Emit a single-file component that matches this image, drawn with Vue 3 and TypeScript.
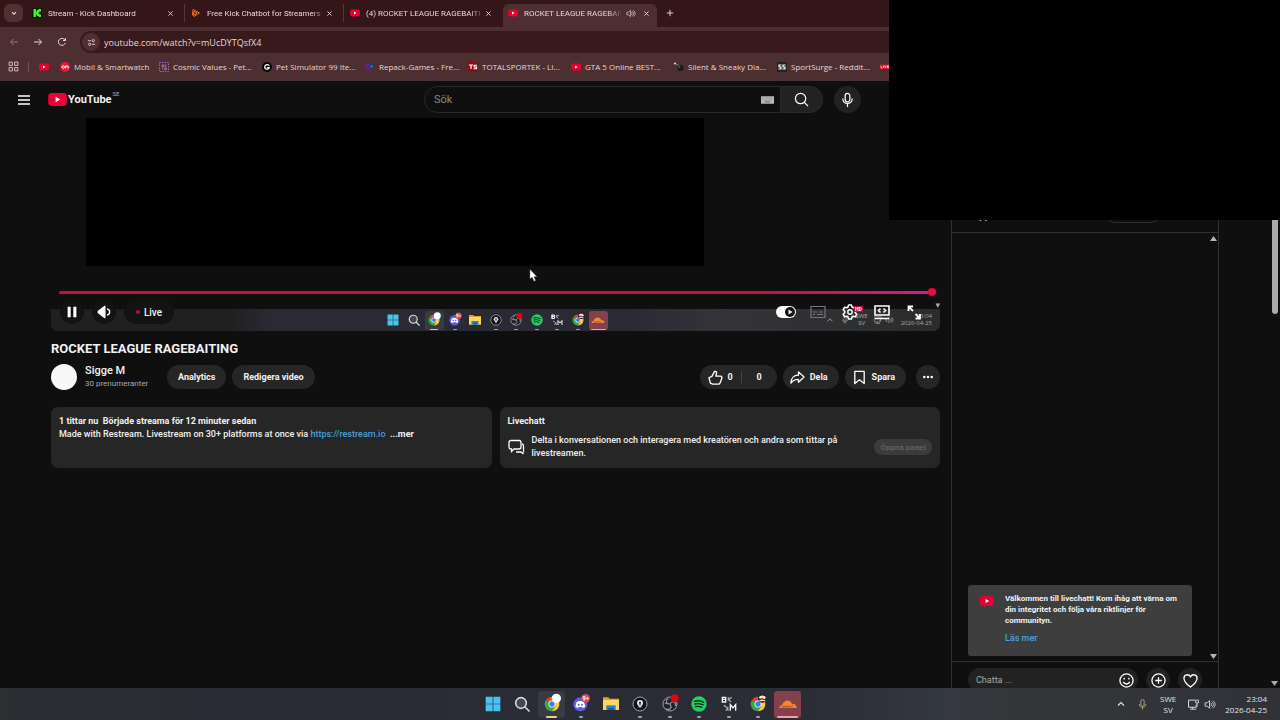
<script setup lang="ts">
import { ref } from 'vue'

interface Tab { icon: string; title: string; active?: boolean; audio?: boolean }
interface Bookmark { icon: string; label: string }
interface App { icon: string; name: string; state: string }

const tabs: Tab[] = [
  { icon: 'kick', title: 'Stream - Kick Dashboard' },
  { icon: 'botrix', title: 'Free Kick Chatbot for Streamers' },
  { icon: 'yt', title: '(4) ROCKET LEAGUE RAGEBAITI' },
  { icon: 'yt', title: 'ROCKET LEAGUE RAGEBAIT', active: true, audio: true },
]

const bookmarks: Bookmark[] = [
  { icon: 'on', label: 'Mobil & Smartwatch' },
  { icon: 'cosmic', label: 'Cosmic Values - Pet...' },
  { icon: 'g', label: 'Pet Simulator 99 Ite...' },
  { icon: 'repack', label: 'Repack-Games - Fre...' },
  { icon: 'ts', label: 'TOTALSPORTEK - LI...' },
  { icon: 'yt', label: 'GTA 5 Online BEST...' },
  { icon: 'bomb', label: 'Silent & Sneaky Dia...' },
  { icon: 'ss', label: 'SportSurge - Reddit...' },
  { icon: 'live', label: '' },
]

const apps: App[] = [
  { icon: 'windows', name: 'Start', state: '' },
  { icon: 'search', name: 'Sök', state: '' },
  { icon: 'chrome-w', name: 'Chrome', state: 'focused' },
  { icon: 'discord', name: 'Discord', state: 'open' },
  { icon: 'folder', name: 'Utforskaren', state: '' },
  { icon: 'lock', name: 'Wallet', state: 'open' },
  { icon: 'obs', name: 'OBS', state: 'open' },
  { icon: 'spotify', name: 'Spotify', state: 'open' },
  { icon: 'bm', name: 'BakkesMod', state: 'open' },
  { icon: 'chrome-p', name: 'Chrome 2', state: 'open' },
  { icon: 'cloud', name: 'Cloudflare', state: 'alert' },
]

const address = ref('youtube.com/watch?v=mUcDYTQsfX4')
const query = ref('')
const message = ref('')
const position = ref(100)
const autoplay = ref(true)
</script>

<template>
  <div class="screen">
    <svg class="sprite" aria-hidden="true">
      <symbol id="yt" viewBox="0 0 20 20"><rect x="0" y="3" width="20" height="14" rx="4" fill="#e60033" /><path d="M8 7l5 3-5 3z" fill="#fff" /></symbol>
      <symbol id="kick" viewBox="0 0 20 20"><rect width="20" height="20" fill="#071b05" /><path d="M3 2h5v5h2V4h3V2h5v5h-3v2h-2v2h2v2h3v5h-5v-2h-3v-3H8v5H3z" fill="#45f52c" /></symbol>
      <symbol id="botrix" viewBox="0 0 20 20"><path d="M4 3l13 7-11 7-3-4 3-1 1 2 5-4-6-3-1 7-2-1z" fill="none" stroke="#f4711c" stroke-width="2" stroke-linejoin="round" /></symbol>
      <symbol id="on" viewBox="0 0 20 20"><circle cx="10" cy="10" r="10" fill="#ee1538" /><g fill="none" stroke="#fff" stroke-width="2"><circle cx="6.500" cy="10" r="2.500" /><path d="M11.500 13V7.500M11.500 10c0-3 5-3 5 0v3" /></g></symbol>
      <symbol id="cosmic" viewBox="0 0 20 20"><rect x="1" y="1" width="18" height="18" fill="none" stroke="#9b62b0" stroke-width="2" stroke-dasharray="3 2" /><path d="M6 6h3v3H6zM11 6h4M11 9h3M7 11v4M11 12h4v3h-4z" fill="none" stroke="#b585c6" stroke-width="1.500" /></symbol>
      <symbol id="g" viewBox="0 0 20 20"><circle cx="10" cy="10" r="10" fill="#050505" /><path d="M14.500 7.500C13 4 5.500 4.500 5.500 10S14 16 14.500 11H10" fill="none" stroke="#fff" stroke-width="2.500" /></symbol>
      <symbol id="repack" viewBox="0 0 20 20"><path d="M2 4l10-2v16l-10-3z" fill="#6c1c82" /><circle cx="13" cy="9" r="6" fill="#243b70" /><circle cx="13" cy="9" r="2" fill="#4290a5" /></symbol>
      <symbol id="ts" viewBox="0 0 20 20"><rect width="20" height="20" fill="#8d0b17" /><path d="M2 6h8M6 6v8M18 6.500h-5.500V10H17v3.500h-6" fill="none" stroke="#fff" stroke-width="2.400" /></symbol>
      <symbol id="bomb" viewBox="0 0 20 20"><circle cx="13" cy="12" r="6" fill="#15191f" /><circle cx="11" cy="10" r="2" fill="#536270" /><path d="M9 7C7 3 5 6 3 3" stroke="#b79667" fill="none" stroke-width="1.500" /><circle cx="2" cy="3" r="2" fill="#ffe39a" /></symbol>
      <symbol id="ss" viewBox="0 0 20 20"><rect width="20" height="20" fill="#222325" /><path d="M9 6H4v4h4v4H3M17 6h-5v4h4v4h-5" fill="none" stroke="#fff" stroke-width="2.300" /></symbol>
      <symbol id="live" viewBox="0 0 20 20"><rect y="5" width="20" height="9" fill="#d6102f" /><path d="M2 7v5h3M7 7v5M9 7l2 5 2-5M18 7.500h-3v4h3M15 9.500h3" fill="none" stroke="#fff" stroke-width="1.300" /></symbol>

      <symbol id="windows" viewBox="0 0 24 24"><path d="M1 1h10.500v10.500H1zM12.500 1H23v10.500H12.500zM1 12.500h10.500V23H1zM12.500 12.500H23V23H12.500z" fill="#49c3f2" /></symbol>
      <symbol id="search" viewBox="0 0 24 24"><circle cx="10.500" cy="10.500" r="8" fill="#45464e" stroke="#d8d9de" stroke-width="2.400" /><path d="M16.500 16.500l6 6" stroke="#d8d9de" stroke-width="2.600" stroke-linecap="round" /></symbol>
      <symbol id="chrome" viewBox="0 0 24 24"><path d="M12 12L2.500 6.500A11 11 0 0 1 21.500 6.500H12z" fill="#e24135" /><path d="M12 12L2.500 6.500A11 11 0 0 0 12 23l5-8z" fill="#38a655" /><path d="M12 12V6.500h9.500A11 11 0 0 1 12 23l5-8z" fill="#f7cb3d" /><circle cx="12" cy="12" r="5.200" fill="#fff" /><circle cx="12" cy="12" r="4" fill="#3d7de2" /></symbol>
      <symbol id="chrome-w" viewBox="0 0 24 24"><use href="#chrome" /><circle cx="18.500" cy="3.500" r="7" fill="#fff" /></symbol>
      <symbol id="chrome-p" viewBox="0 0 24 24"><use href="#chrome" /><circle cx="18.500" cy="3.500" r="6.500" fill="#2b1d19" /><path d="M13 3c1-5 10-5 11 0l-3 2-5-1z" fill="#f0e7df" /><circle cx="18" cy="5" r="2.200" fill="#bd4b31" /><path d="M14 7h9" stroke="#fff" stroke-width="1.500" /></symbol>
      <symbol id="discord" viewBox="0 0 24 24"><circle cx="11" cy="12.500" r="10.500" fill="#5661e8" /><path d="M5.500 9c3-2 8-2 11 0l2 7-4 2-1-1.500h-5L7.500 18l-4-2z" fill="#fff" /><circle cx="8.500" cy="13" r="1.500" fill="#5661e8" /><circle cx="13.500" cy="13" r="1.500" fill="#5661e8" /><circle cx="19" cy="3.500" r="6.500" fill="#d54857" /><path d="M18 3.500h-3v-3h3V6h-3M19.500 3.500h4M21.500 1.500v4" stroke="#fff" fill="none" stroke-width="1.200" /></symbol>
      <symbol id="folder" viewBox="0 0 24 24"><path d="M0 2h8l2 2h14v17H0z" fill="#e2a42a" /><path d="M0 6h24v15H0z" fill="#fdd660" /><path d="M5 14h14v7H5z" fill="#2683c6" /><path d="M8 18h8v3H8z" fill="#135c9a" /></symbol>
      <symbol id="lock" viewBox="0 0 24 24"><circle cx="12" cy="12" r="10.500" fill="#111216" stroke="#a1a4a9" stroke-width="1.500" /><circle cx="12" cy="10.500" r="4.500" fill="#e6e6e6" /><path d="M10 13h4v4h-4z" fill="#e6e6e6" /><circle cx="12" cy="10" r="1.500" fill="#111" /><path d="M12 11v3" stroke="#111" stroke-width="1.500" /></symbol>
      <symbol id="obs" viewBox="0 0 24 24"><circle cx="12" cy="12" r="10.500" fill="#202126" stroke="#a0a1a5" stroke-width="1.500" /><path d="M12 12C5 12 5 5 10 4M12 12c3-6 10-3 8 3M12 12c4 5 0 10-6 7M4 11c4-1 6 1 8 1" fill="none" stroke="#9c9da2" stroke-width="1.600" /><circle cx="19" cy="3.500" r="6" fill="#dc0610" /></symbol>
      <symbol id="spotify" viewBox="0 0 24 24"><circle cx="12" cy="12" r="11.500" fill="#20cf5d" /><path d="M5 8c5-1.500 10-1 14 1.500M6 12c4-1.200 8-.8 12 1.400M7 16c3.500-1 6-.6 9 1" stroke="#10231a" stroke-width="2" stroke-linecap="round" fill="none" /></symbol>
      <symbol id="bm" viewBox="0 0 24 24"><path d="M2 2h5v3H2zM2 5h5v4H2zM2 1v9M14 22v-9l4 5 4-5v9" fill="none" stroke="#f5f5f5" stroke-width="2" /><path d="M11 2v5M11 5l5-3M11 5l4 4M4 14l5 3 2 5M7 22l4-5" stroke="#aaa" stroke-width="2" /></symbol>
      <symbol id="cloud" viewBox="0 0 24 24"><path d="M-1 18c0-3 2-4 4-4 1-4 5-8 10-7 3 1 4 2 5 5 4-1 7 2 7 6z" fill="#ef8730" /><path d="M3 15.500h13l-1 1H3M19 13.500l-2 4" stroke="#9d4a34" stroke-width="1" fill="none" /></symbol>

      <symbol id="speaker" viewBox="0 0 20 20"><path d="M2 7h4l4-4v14l-4-4H2zM12 7c2 2 2 4 0 6M14 5c4 3 4 7 0 10M16.500 3c5 5 5 9 0 14" fill="none" stroke="currentColor" stroke-width="1.500" /></symbol>
      <symbol id="monitor" viewBox="0 0 20 20"><path d="M13 2H1v13h14V10M4 18.500h11M8 15v3" fill="none" stroke="currentColor" stroke-width="1.700" /><path d="M14 2h5v5h-5zM16.500 7v7" fill="none" stroke="currentColor" stroke-width="1.500" /></symbol>
      <symbol id="mic" viewBox="0 0 20 20"><path d="M7 4a3 3 0 0 1 6 0v6a3 3 0 0 1-6 0zM4 9c0 8 12 8 12 0M10 15v4" fill="none" stroke="currentColor" stroke-width="1.600" /></symbol>
      <symbol id="caret" viewBox="0 0 20 20"><path d="M4 13l6-6 6 6" fill="none" stroke="currentColor" stroke-width="2.200" /></symbol>
      <symbol id="cross" viewBox="0 0 20 20"><path d="M4 4l12 12M16 4L4 16" stroke="currentColor" stroke-width="2.600" /></symbol>
    </svg>

    <header class="browser">
      <div class="tabstrip">
        <button class="tab-menu" aria-label="Sök flikar"><svg viewBox="0 0 20 20"><path d="M5 8l5 5 5-5" fill="none" stroke="currentColor" stroke-width="3" /></svg></button>
        <div v-for="(tab, i) in tabs" :key="i" class="tab" :class="{ active: tab.active }">
          <svg class="fav"><use :href="'#' + tab.icon" /></svg>
          <span class="tab-title">{{ tab.title }}</span>
          <svg v-if="tab.audio" class="audio"><use href="#speaker" /></svg>
          <button class="close" aria-label="Stäng"><svg><use href="#cross" /></svg></button>
        </div>
        <button class="new-tab" aria-label="Ny flik"><svg viewBox="0 0 20 20"><path d="M10 2v16M2 10h16" stroke="currentColor" stroke-width="2.400" /></svg></button>
      </div>
      <div class="toolbar">
        <button class="nav dim" aria-label="Bakåt"><svg viewBox="0 0 20 20"><path d="M18 10H3M9 4l-6 6 6 6" /></svg></button>
        <button class="nav" aria-label="Framåt"><svg viewBox="0 0 20 20"><path d="M2 10h15M11 4l6 6-6 6" /></svg></button>
        <button class="nav" aria-label="Ladda om"><svg viewBox="0 0 20 20"><path d="M16.500 12a7 7 0 1 1-1.500-7l2 2M17 2v5h-5" /></svg></button>
        <div class="address">
          <button class="site" aria-label="Webbplatsinformation"><svg viewBox="0 0 20 20"><path d="M2 6h7M11 14h7" /><circle cx="14" cy="6" r="2.500" /><circle cx="6" cy="14" r="2.500" /></svg></button>
          <input v-model="address" aria-label="Adress" />
        </div>
      </div>
      <nav class="bookmarks">
        <button class="grid" aria-label="Appar"><svg viewBox="0 0 20 20"><path d="M2 2h6v6H2zM12 2h6v6h-6zM2 12h6v6H2zM12 12h6v6h-6z" /></svg></button>
        <i class="rule"></i>
        <a href="#" class="bookmark-icon" aria-label="YouTube"><svg class="fav"><use href="#yt" /></svg></a>
        <a v-for="b in bookmarks" :key="b.icon" href="#" class="bookmark"><svg class="fav"><use :href="'#' + b.icon" /></svg><span>{{ b.label }}</span></a>
      </nav>
    </header>

    <div class="page">
      <header class="masthead">
        <button class="burger" aria-label="Meny"><svg viewBox="0 0 12 12"><path d="M0 2h12M0 6h12M0 10h12" stroke="#fff" stroke-width="1.300" /></svg></button>
        <a href="#" class="logo"><svg viewBox="0 0 20 14"><rect width="20" height="14" rx="4" fill="#f10035" /><path d="M8 4l5 3-5 3z" fill="#fff" /></svg><b>YouTube</b><sup>SE</sup></a>
        <form class="search" @submit.prevent>
          <div class="search-field">
            <input v-model="query" placeholder="Sök" aria-label="Sök" />
            <svg class="keyboard" viewBox="0 0 14 8"><rect width="14" height="8" fill="#bcbcbc" /><path d="M1 2h12M1 4h12" stroke="#777" stroke-dasharray="1 1" /><path d="M4 6h6" stroke="#666" /></svg>
          </div>
          <button class="search-go" aria-label="Sök"><svg viewBox="0 0 16 16"><circle cx="7" cy="7" r="5.500" /><path d="M11 11l4 4" /></svg></button>
          <button class="voice" type="button" aria-label="Röstsökning"><svg viewBox="0 0 16 16"><path d="M5.500 4a2.500 2.500 0 0 1 5 0v4a2.500 2.500 0 0 1-5 0zM3 7c0 7 10 7 10 0M8 12.500V16" /></svg></button>
        </form>
      </header>

      <div class="columns">
        <main class="watch">
          <section class="player">
            <div class="frame"></div>
            <div class="mini-taskbar">
              <div class="apps">
                <span v-for="a in apps" :key="a.name" class="app" :class="a.state"><svg><use :href="'#' + a.icon" /></svg></span>
              </div>
              <div class="tray">
                <svg><use href="#caret" /></svg><svg><use href="#mic" /></svg>
                <span class="lang">SWE<br />SV</span>
                <svg><use href="#monitor" /></svg><svg><use href="#speaker" /></svg>
                <span class="clock">23:04<br />2026-04-25</span>
              </div>
              <i class="scroll-mark">▾</i>
            </div>
            <input v-model="position" class="progress" type="range" min="0" max="100" aria-label="Sökreglage" />
            <div class="controls">
              <button class="ctl dark" aria-label="Pausa"><svg viewBox="0 0 16 16"><path d="M3 2h3.500v12H3zM9.500 2H13v12H9.500z" fill="#fff" /></svg></button>
              <button class="ctl dark" aria-label="Ljud"><svg viewBox="0 0 16 16"><path d="M1.500 7.200L9 1.500v13L1.500 8.800z" fill="#fff" stroke="#fff" stroke-width="1.500" stroke-linejoin="round" /><path d="M11.500 4.500c4 1 4 6 0 7" fill="none" stroke="#fff" stroke-width="1.500" /></svg></button>
              <button class="live"><i></i>Live</button>
              <span class="spacer"></span>
              <label class="toggle"><input v-model="autoplay" type="checkbox" aria-label="Automatisk uppspelning" /><svg viewBox="0 0 12 12"><circle cx="6" cy="6" r="5" fill="#111" /><path d="M4.500 3.500L8.500 6l-4 2.500z" fill="#fff" /></svg></label>
              <button class="ctl faint" aria-label="Undertexter"><svg viewBox="0 0 16 16"><path d="M1 2.500h14v11H1zM3 8h4M9 8h4M3 10.500h2M7 10.500h6" fill="none" stroke="#777" stroke-width="1.200" /></svg></button>
              <button class="ctl settings" aria-label="Inställningar"><svg viewBox="0 0 16 16"><path d="M6.600 1h2.800l.6 2 1.300.7 2-.5 1.500 2.500-1.500 1.500v1.600l1.500 1.500-1.500 2.500-2-.5-1.300.7-.6 2H6.600L6 13l-1.300-.7-2 .5-1.500-2.500 1.500-1.500V7.200L1.200 5.700l1.500-2.500 2 .5L6 3z" fill="none" stroke="#fff" stroke-width="1.600" stroke-linejoin="round" /><circle cx="8" cy="8" r="2.200" fill="none" stroke="#fff" stroke-width="1.400" /></svg><em>HD</em></button>
              <button class="ctl" aria-label="Bioläge"><svg viewBox="0 0 16 16"><path d="M1 2h14v9H1zM1 14.500h14M6.500 4.500l-2 2 2 2M9.500 4.500l2 2-2 2" fill="none" stroke="#fff" stroke-width="1.600" /></svg></button>
              <button class="ctl" aria-label="Helskärm"><svg viewBox="0 0 16 16"><path d="M7 2.500H2.500V7M2.500 2.500L7 7M9.500 14.500H14V10M14 14.500L9.500 10" fill="none" stroke="#fff" stroke-width="1.800" /></svg></button>
            </div>
            <svg class="cursor" viewBox="0 0 10 14"><path d="M1 0v11l2.500-2 2 4.500 2-1-2-4H9z" fill="#fff" stroke="#333" stroke-width=".5" /></svg>
          </section>

          <h1>ROCKET LEAGUE RAGEBAITING</h1>
          <div class="meta">
            <div class="avatar"></div>
            <div class="channel"><a href="#">Sigge M</a><span>30 prenumeranter</span></div>
            <button class="pill">Analytics</button>
            <button class="pill">Redigera video</button>
            <span class="spacer"></span>
            <div class="rating">
              <button><svg viewBox="0 0 16 16"><path d="M1 8l3-1 3-5.500c2-.5 2.500 1 2 2.500l-.7 2.500H13c2 0 2.300 1.500 1.500 3l-1.500 4c-.4 1-1 1.500-2 1.500H5L2.500 14z" /></svg>0</button>
              <button>0</button>
            </div>
            <button class="pill icon"><svg viewBox="0 0 16 16"><path d="M9 2l6 5.500L9 13v-3c-4 0-6 1-8 4 0-5 3-8.500 8-8.500z" /></svg>Dela</button>
            <button class="pill icon"><svg viewBox="0 0 16 16"><path d="M3 1.500h10v13L8 10.500l-5 4z" /></svg>Spara</button>
            <button class="more" aria-label="Mer"><svg viewBox="0 0 16 16"><circle cx="3" cy="8" r="1.700" /><circle cx="8" cy="8" r="1.700" /><circle cx="13" cy="8" r="1.700" /></svg></button>
          </div>

          <div class="cards">
            <section class="card">
              <p><b>1 tittar nu&nbsp; Började streama för 12 minuter sedan</b></p>
              <p>Made with Restream. Livestream on 30+ platforms at once via <a href="#">https://restream.io</a>&nbsp; <b>...mer</b></p>
            </section>
            <section class="card">
              <p><b>Livechatt</b></p>
              <div class="teaser">
                <svg viewBox="0 0 16 16"><path d="M3 1.500h8q2 0 2 2V8q0 2-2 2H6l-2.500 2.500V10H3q-2 0-2-2V3.500q0-2 2-2zM14 5q1.500 0 1.500 2v6.500M15.500 15l-2.500-2H8" /></svg>
                <p>Delta i konversationen och interagera med kreatören och andra som tittar på livestreamen.</p>
                <button disabled>Öppna panel</button>
              </div>
            </section>
          </div>
        </main>

        <aside class="chat">
          <header><span>Toppchatt</span><button class="chip" aria-label="Reaktioner"></button><button aria-label="Mer">⋮</button><button aria-label="Stäng">✕</button></header>
          <div class="messages">
            <i class="arrow up"></i>
            <div class="notice">
              <svg><use href="#yt" /></svg>
              <div>
                <p>Välkommen till livechatt! Kom ihåg att värna om din integritet och följa våra riktlinjer för communityn.</p>
                <a href="#">Läs mer</a>
              </div>
            </div>
            <i class="arrow down"></i>
          </div>
          <footer>
            <div class="compose"><input v-model="message" placeholder="Chatta ..." aria-label="Chatta" /><button aria-label="Emoji"><svg viewBox="0 0 16 16"><circle cx="8" cy="8" r="7" /><path d="M4.500 9.500c1.500 3 5.500 3 7 0M5.500 5v2M10.500 5v2" /></svg></button></div>
            <button class="round" aria-label="Lägg till"><svg viewBox="0 0 16 16"><circle cx="8" cy="8" r="7" /><path d="M8 4.500v7M4.500 8h7" /></svg></button>
            <button class="round" aria-label="Gilla"><svg viewBox="0 0 16 16"><path d="M8 15C4 12 1 9 1 5.500 1 1.500 6 .5 8 4c2-3.500 7-2.500 7 1.500C15 9 12 12 8 15z" /></svg></button>
          </footer>
        </aside>
      </div>
      <div class="scrollbar"><i></i></div>
    </div>

    <footer class="taskbar">
      <div class="apps">
        <button v-for="a in apps" :key="a.name" class="app" :class="a.state" :aria-label="a.name"><svg><use :href="'#' + a.icon" /></svg></button>
      </div>
      <div class="tray">
        <svg><use href="#caret" /></svg><svg class="mic"><use href="#mic" /></svg>
        <span class="lang">SWE<br />SV</span>
        <svg><use href="#monitor" /></svg><svg><use href="#speaker" /></svg>
        <span class="clock">23:04<br />2026-04-25</span>
      </div>
    </footer>

    <div class="cover"></div>
  </div>
</template>

<style>
body { background: #0f0f0f; overflow: hidden; }
</style>

<style scoped>
* { box-sizing: border-box; }
svg { display: block; flex: none; overflow: visible; }
symbol { overflow: visible; }
button { border: 0; padding: 0; background: none; color: inherit; font: inherit; display: flex; align-items: center; justify-content: center; flex: none; }
input { border: 0; padding: 0; margin: 0; background: none; color: inherit; font: inherit; outline: 0; min-width: 0; }
a { color: inherit; text-decoration: none; }
p, h1 { margin: 0; }
.sprite { position: absolute; width: 0; height: 0; }
.spacer { flex: 1; }
.screen { position: relative; display: flex; flex-direction: column; height: 100vh; overflow: hidden; background: #0f0f0f; color: #f1f1f1; font-family: Roboto, "Liberation Sans", sans-serif; font-size: 9px; }

/* Browser */
.browser { flex: none; background: #4e2f31; color: #e8d5d5; font-family: "Open Sans", "Noto Sans", sans-serif; font-size: 8px; overflow: hidden; }
.tabstrip { display: flex; height: 27px; padding: 4px 0 0 4px; background: #351618; font-family: Roboto, "Liberation Sans", sans-serif; }
.tab-menu { width: 19px; height: 18px; border-radius: 6px; background: #542f32; margin-right: 3px; }
.tab-menu svg { width: 8px; height: 8px; }
.tab { display: flex; align-items: center; flex: none; width: 159px; height: 18px; padding: 0 10px 0 6px; border-right: 1px solid #573638; }
.tab:nth-child(4) { border-color: transparent; }
.tab.active { width: 154px; height: 23px; padding: 0 7px 5px 5px; border: 0; border-radius: 6px 6px 0 0; background: #4e2f31; }
.fav { width: 10px; height: 10px; }
.tab-title { flex: 1; min-width: 0; margin: 0 5px 0 6px; white-space: nowrap; -webkit-mask-image: linear-gradient(90deg, #000 105px, transparent 118px); mask-image: linear-gradient(90deg, #000 105px, transparent 118px); }
.active .tab-title { -webkit-mask-image: linear-gradient(90deg, #000 84px, transparent 100px); mask-image: linear-gradient(90deg, #000 84px, transparent 100px); }
.audio { width: 9px; height: 9px; margin-right: 8px; }
.close svg { width: 7px; height: 7px; }
.new-tab { height: 18px; margin-left: 9px; }
.new-tab svg { width: 8px; height: 8px; }
.toolbar { display: flex; align-items: center; gap: 14px; height: 30px; padding-left: 9px; }
.nav svg { width: 10px; height: 10px; fill: none; stroke: currentColor; stroke-width: 2; }
.dim { color: #92797a; }
.address { display: flex; align-items: center; flex: 1; height: 22px; margin-left: -1px; padding-left: 2px; gap: 4px; border-radius: 11px 0 0 11px; background: #391a1c; font-size: 9px; }
.address input { flex: 1; }
.site { width: 18px; height: 18px; border-radius: 50%; background: #512e31; }
.site svg { width: 9px; height: 9px; fill: none; stroke: currentColor; stroke-width: 2; }
.bookmarks { display: flex; align-items: center; height: 24px; padding: 0 0 5px 8px; }
.grid svg { width: 11px; height: 11px; fill: none; stroke: currentColor; stroke-width: 1.5; }
.rule { width: 1px; height: 10px; margin: 0 10px 0 9px; background: #795456; }
.bookmark-icon { margin-right: 11px; }
.bookmark { display: flex; align-items: center; flex: none; gap: 4px; width: 103px; white-space: nowrap; }
.bookmark:nth-child(4) { width: 99px; }

/* Masthead */
.page { position: relative; display: flex; flex-direction: column; flex: 1; min-height: 0; overflow: hidden; }
.masthead { display: flex; align-items: center; flex: none; height: 37px; padding-left: 18px; }
.burger svg { width: 12px; height: 12px; }
.logo { display: flex; align-items: center; gap: 1px; width: 100px; height: 20px; margin-left: 18px; }
.logo > svg { width: 19px; height: 13px; }
.logo b { font-size: 11px; line-height: 14px; }
.logo sup { align-self: flex-start; font-size: 6px; line-height: 8px; color: #aaa; }
.search { display: flex; flex: 1; margin: 0 419px 0 276px; }
.search-field { display: flex; align-items: center; flex: 1; min-width: 0; height: 27px; padding: 0 6px 0 9px; border: 1px solid #292929; border-radius: 14px 0 0 14px; font-size: 11px; }
.search-field input { flex: 1; }
input::placeholder { color: #888; opacity: 1; }
.keyboard { width: 13px; height: 8px; }
.search-go { width: 42px; height: 27px; border: 1px solid #292929; border-left: 0; border-radius: 0 14px 14px 0; background: #222; }
.search-go svg, .voice svg { width: 15px; height: 15px; fill: none; stroke: #fff; stroke-width: 1.3; }
.voice { width: 27px; height: 27px; margin-left: 11px; border-radius: 50%; background: #222; }

/* Watch column */
.columns { display: flex; flex: 1; min-height: 0; padding-right: 61px; }
.watch { flex: 1; min-width: 0; padding: 0 11px 0 51px; }
.player { position: relative; height: 213px; }
.frame { width: 618px; max-width: 70%; height: 148px; margin-left: 35px; background: #000; }
.progress { position: relative; display: block; width: calc(100% - 12px); height: 10px; margin: 21px 0 0 8px; appearance: none; }
.progress::-webkit-slider-runnable-track { height: 3px; background: linear-gradient(90deg, #c4123c 80%, #d61c8c); border-radius: 2px; }
.progress::-webkit-slider-thumb { appearance: none; width: 8px; height: 8px; margin-top: -3px; border-radius: 50%; background: #f00843; }
.controls { position: relative; display: flex; align-items: center; gap: 8px; height: 24px; margin-top: 3px; padding: 0 14px 0 9px; }
.ctl { position: relative; width: 24px; height: 24px; border-radius: 50%; }
.ctl svg { width: 16px; height: 16px; }
.dark { background: #131313; }
.dark svg { width: 14px; height: 14px; }
.settings em { position: absolute; top: 6px; left: 16px; padding: 0 1px; border-radius: 1px; background: #c70a38; font: bold 5px/6px Roboto, sans-serif; }
.live { gap: 4px; width: 50px; height: 24px; border-radius: 12px; background: #131313; font-size: 10px; font-weight: 500; }
.live i { width: 4px; height: 4px; border-radius: 50%; background: #c70a38; }
.toggle { position: relative; width: 24px; height: 12px; padding: 0 2px; }
.toggle input { display: block; width: 20px; height: 12px; appearance: none; border-radius: 6px; background: #fff; }
.toggle svg { position: absolute; top: 0; right: 2px; width: 12px; height: 12px; }
.cursor { position: absolute; left: 478px; top: 151px; width: 9px; height: 13px; }
.mini-taskbar { position: absolute; inset: auto 0 0; display: flex; justify-content: center; height: 22px; border-radius: 0 0 7px 7px; background: linear-gradient(90deg, #202020 20%, #292a34 25%, #292a34 65%, #333438 75%, #2c2c2e); }
.scroll-mark { position: absolute; right: 0; top: -9px; color: #aaa; font: 9px/11px "DejaVu Sans", sans-serif; }
h1 { margin-top: 10px; font-size: 13px; line-height: 16px; font-weight: 700; }
.meta { display: flex; align-items: center; gap: 6px; height: 26px; margin-top: 7px; font-weight: 700; }
.avatar { flex: none; width: 26px; height: 26px; border-radius: 50%; background: #f7f7f7; }
.channel { display: flex; flex-direction: column; width: 76px; margin-left: 2px; }
.channel a { font-size: 11px; line-height: 13px; font-weight: 500; }
.channel span { font-size: 8px; line-height: 13px; font-weight: 400; color: #aaa; white-space: nowrap; }
.pill { height: 24px; padding: 0 11px; border-radius: 12px; background: #262626; }
.icon { gap: 5px; padding: 0 11px 0 7px; }
.meta svg { width: 15px; height: 15px; fill: none; stroke: #fff; stroke-width: 1.4; stroke-linejoin: round; }
.rating { display: flex; height: 24px; border-radius: 12px; background: #262626; }
.rating button { width: 35px; gap: 5px; }
.rating button:first-child { width: 42px; margin: 6px 0; border-right: 1px solid #444; }
.more { width: 24px; height: 24px; margin-left: 4px; border-radius: 50%; background: #262626; }
.more svg { width: 12px; height: 12px; fill: #fff; stroke: none; }
.cards { display: grid; grid-template-columns: 1fr 1fr; gap: 8px; margin-top: 17px; }
.card { min-width: 0; height: 61px; padding: 8px 8px 6px; border-radius: 7px; background: #262626; line-height: 13px; font-weight: 500; }
.card b { font-weight: 700; }
.card a { color: #4a9ddb; }
.teaser { display: flex; align-items: center; margin-top: 6px; }
.teaser svg { width: 16px; height: 16px; fill: none; stroke: #fff; stroke-width: 1.3; }
.teaser p { flex: 1; margin: 0 16px 0 8px; }
.teaser button { width: 58px; height: 16px; border-radius: 8px; background: #3b3b3b; color: #666; font-size: 8px; font-weight: 500; }

/* Live chat */
.chat { display: flex; flex-direction: column; flex: none; width: 268px; border: solid #303030; border-width: 0 1px; }
.chat header { display: flex; align-items: flex-end; flex: none; height: 115px; padding: 0 8px 9px 16px; border-bottom: 1px solid #303030; font-size: 10px; line-height: 14px; }
.chat header span { flex: 1; }
.chat header button { width: 25px; }
.chat header .chip { width: 54px; height: 18px; border: 1px solid #303030; border-radius: 9px; }
.messages { position: relative; display: flex; align-items: flex-end; flex: 1; padding: 0 26px 5px 16px; }
.notice { display: flex; flex: 1; gap: 11px; min-height: 71px; padding: 8px 14px 8px 12px; border-radius: 3px; background: #3e3e3e; font-size: 8px; line-height: 11px; font-weight: 700; }
.notice svg { width: 14px; height: 14px; margin-top: 1px; }
.notice a { display: block; margin-top: 7px; color: #4aa3df; font-size: 9px; font-weight: 500; }
.arrow { position: absolute; right: 1px; width: 7px; height: 5px; background: #b5b5b5; }
.up { top: 3px; clip-path: polygon(50% 0, 100% 100%, 0 100%); }
.down { bottom: 2px; clip-path: polygon(0 0, 100% 0, 50% 100%); }
.chat footer { display: flex; align-items: flex-start; flex: none; gap: 8px; height: 27px; padding: 6px 0 0 16px; border-top: 1px solid #303030; }
.compose { display: flex; align-items: center; flex: none; width: 170px; height: 24px; padding: 0 4px 0 8px; border-radius: 12px; background: #222; }
.compose input { flex: 1; }
.compose input::placeholder { color: #aaa; }
.chat footer svg { width: 15px; height: 15px; fill: none; stroke: #fff; stroke-width: 1.4; }
.round { width: 24px; height: 24px; border-radius: 50%; background: #222; }
.scrollbar { position: absolute; inset: 0 0 0 auto; width: 11px; }
.scrollbar i { position: absolute; top: 19px; right: 2px; width: 6px; height: 214px; border-radius: 3px; background: #aaa; }
.scrollbar::after { content: ""; position: absolute; bottom: 2px; right: 2px; width: 7px; height: 5px; background: #aaa; clip-path: polygon(0 0, 100% 0, 50% 100%); }

/* Taskbars */
.taskbar { position: relative; display: flex; justify-content: center; flex: none; height: 32px; background: linear-gradient(90deg, #2c2e32, #292b35 22%, #2b2c36 63%, #343840 74%, #343638 80%, #303238); }
.apps { display: flex; align-items: center; justify-content: space-between; width: 322px; }
.app { position: relative; display: flex; align-items: center; justify-content: center; width: 27px; height: 27px; border-radius: 3px; }
.app svg { width: 16px; height: 16px; }
.focused { background: #393a42; }
.alert { background: #84404c; }
.app::after { position: absolute; bottom: 0; width: 4px; height: 2px; border-radius: 1px; background: #a2a3a8; }
.open::after, .focused::after, .alert::after { content: ""; }
.focused::after { width: 11px; background: #e5cf91; }
.alert::after { width: 21px; background: #f79cab; }
.tray { position: absolute; top: 0; bottom: 0; right: 13px; display: flex; align-items: center; color: #e4e4e6; font: 8px/11px "Open Sans", "Noto Sans", sans-serif; }
.tray svg { width: 11px; height: 11px; margin-right: 5px; }
.tray svg:first-child { width: 10px; height: 10px; margin-right: 11px; }
.tray .mic { color: #b4b08d; margin-right: 12px; }
.lang { margin-right: 12px; text-align: center; }
.clock { margin-left: 5px; text-align: right; }
.mini-taskbar .apps { width: 224px; }
.mini-taskbar .app { width: 19px; height: 19px; }
.mini-taskbar .app svg { width: 12px; height: 12px; }
.mini-taskbar .focused::after { width: 8px; }
.mini-taskbar .alert::after { width: 15px; }
.mini-taskbar .app::after { height: 1px; }
.mini-taskbar .tray { right: 8px; color: #a8a8a8; font-size: 6px; line-height: 7px; }
.mini-taskbar .tray svg { width: 8px; height: 8px; margin-right: 3px; }
.mini-taskbar .tray svg:first-child { margin-right: 7px; }
.mini-taskbar .lang { margin: 0 6px 0 4px; }

.cover { position: absolute; top: 0; right: 0; width: 391px; height: 220px; background: #000; }
</style>
